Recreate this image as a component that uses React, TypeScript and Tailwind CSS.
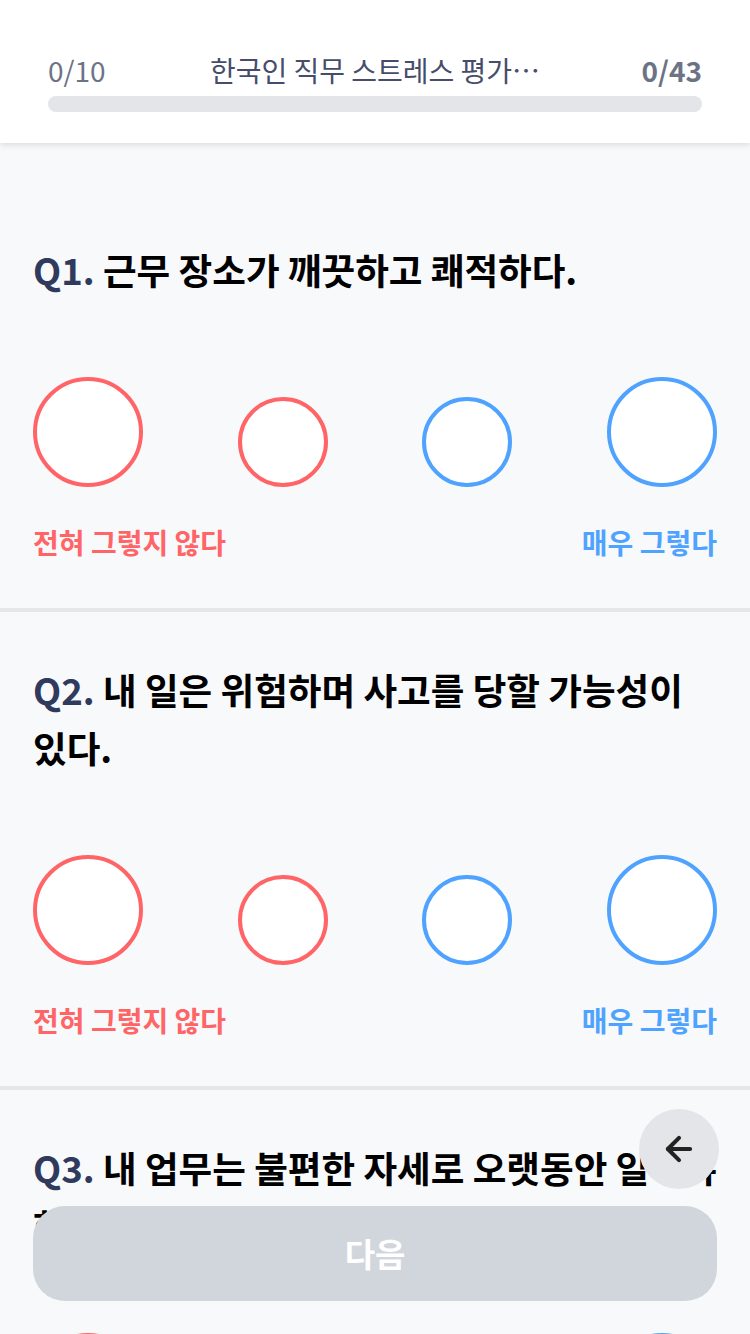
import { ArrowLeft } from 'lucide-react';

const questions = [
  '근무 장소가 깨끗하고 쾌적하다.',
  '내 일은 위험하며 사고를 당할 가능성이 있다.',
  '내 업무는 불편한 자세로 오랫동안 일해야 한다.',
];

function Scale() {
  return (
    <>
      <div className="flex items-end justify-between">
        <button className="w-[110px] h-[110px] rounded-full border-[4px] border-[#ff6467] bg-white" />
        <button className="w-[90px] h-[90px] rounded-full border-[4px] border-[#ff6467] bg-white" />
        <button className="w-[90px] h-[90px] rounded-full border-[4px] border-[#4fa3ff] bg-white" />
        <button className="w-[110px] h-[110px] rounded-full border-[4px] border-[#4fa3ff] bg-white" />
      </div>
      <div className="flex justify-between mt-[37px] text-[28px] leading-[36px] font-bold">
        <span className="text-[#ff6467]">전혀 그렇지 않다</span>
        <span className="text-[#4fa3ff]">매우 그렇다</span>
      </div>
    </>
  );
}

export default function App() {
  return (
    <div
      className="min-h-screen bg-[#f8f9fb]"
      style={{ fontFamily: '"Noto Sans CJK KR", "Noto Sans", sans-serif' }}
    >
      {/* Header */}
      <header className="bg-white shadow-[0_2px_6px_rgba(0,0,0,0.12)] px-[48px] pt-[50px] pb-[31px]">
        <div className="flex items-center h-[40px] text-[28px] text-[#6b7385]">
          <span className="w-[90px]">0/10</span>
          <span className="flex-1 text-center truncate text-[#464d6b]">한국인 직무 스트레스 평가…</span>
          <span className="w-[90px] text-right font-bold">0/43</span>
        </div>
        <div className="mt-[6px] h-[16px] rounded-full bg-[#e4e5e9]" />
      </header>

      {/* Questions */}
      <main className="pt-[49px] pb-[260px]">
        {questions.map((q, i) => (
          <section
            key={i}
            className="px-[33px] pt-[49px] pb-[48px] border-b-[4px] border-[#e6e7e9] last:border-b-0"
          >
            <h2 className="text-[36.6px] leading-[58px] font-bold text-black">
              <span className="text-[#2f3a5c]">Q{i + 1}.</span> {q}
            </h2>
            <div className="mt-[78px]">
              <Scale />
            </div>
          </section>
        ))}
      </main>

      {/* Floating back button */}
      <button className="fixed right-[31px] bottom-[145px] w-[80px] h-[80px] rounded-full bg-[#e4e5e9] flex items-center justify-center">
        <ArrowLeft size={38} strokeWidth={2.6} className="text-[#222]" />
      </button>

      {/* Next button */}
      <div className="fixed left-0 right-0 bottom-[33px] px-[33px]">
        <button className="w-full h-[95px] rounded-[32px] bg-[#d1d5dc] text-white text-[33px] font-bold">
          다음
        </button>
      </div>
    </div>
  );
}
